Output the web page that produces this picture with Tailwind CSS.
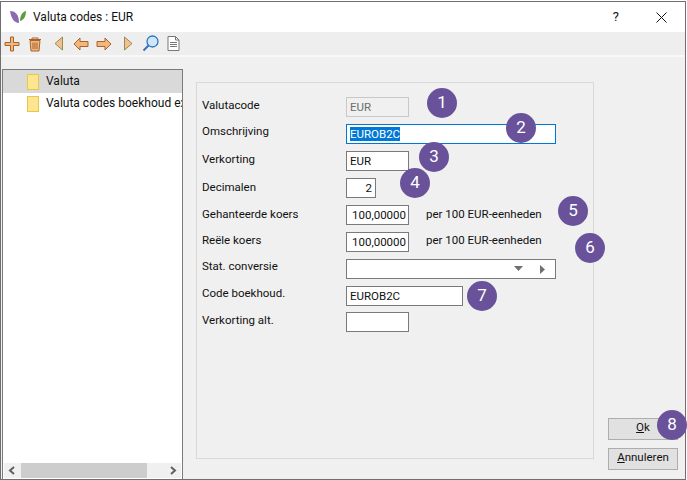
<!DOCTYPE html>
<html>
  <head>
    <meta charset="UTF-8" />
    <title>Valuta codes : EUR</title>
    <script src="https://cdn.jsdelivr.net/npm/@tailwindcss/browser@4"></script>
  </head>

  <body class="bg-white">
    <div class="relative w-[687px] h-[480px] overflow-hidden font-['Roboto',sans-serif] text-[11.5px] text-[#111] pt-[1px] pr-[1px]">
      <div class="flex flex-col h-[479px] border-[1.5px] border-[#6f6f6f] bg-[#f0f0f0]">
        <!-- title bar -->
        <div class="flex items-center h-[30px] bg-white pl-[8px] shrink-0">
          <svg width="18" height="14" viewBox="0 0 18 14">
            <path d="M1 1C6 1 10 4 10 13C5 13 2 8 1 1Z" fill="#8a6bb1" />
            <path d="M17 1C13 2 11 6 11 11C15 10 17 6 17 1Z" fill="#5c9e3c" />
          </svg>
          <span class="ml-[6px] text-[12px]">Valuta codes : EUR</span>
          <span class="ml-auto mr-[37px] text-[13px]">?</span>
          <svg class="mr-[18px]" width="11" height="11" viewBox="0 0 11 11">
            <path d="M0.5 0.5L10.5 10.5M10.5 0.5L0.5 10.5" stroke="#111" fill="none" />
          </svg>
        </div>

        <!-- toolbar -->
        <div class="flex items-center h-[23px] bg-[#eeeeee] shrink-0 pl-[2px] border-b-0">
          <svg class="ml-[1px]" width="16" height="16" viewBox="0 0 16 16">
            <path d="M6.5 1H9.5V6.5H15V9.5H9.5V15H6.5V9.5H1V6.5H6.5Z" fill="#f3b67c" stroke="#a5652e" />
          </svg>
          <svg class="ml-[7px]" width="16" height="16" viewBox="0 0 16 16">
            <path d="M2 3.5H14M5 3.5V2H11V3.5" fill="none" stroke="#a5652e" />
            <path d="M3 4.5H13L12 15H4Z" fill="#f3b67c" stroke="#a5652e" />
            <path d="M6 6.5V13M8 6.5V13M10 6.5V13" stroke="#a5652e" />
          </svg>
          <svg class="ml-[11px]" width="10" height="15" viewBox="0 0 10 15">
            <path d="M8.5 1V14L1 7.5Z" fill="#f3c08e" stroke="#9a8a55" />
          </svg>
          <svg class="ml-[9px]" width="16" height="14" viewBox="0 0 16 14">
            <path d="M7 1L1 7L7 13V9.5H15V4.5H7Z" fill="#f3b67c" stroke="#a5652e" />
          </svg>
          <svg class="ml-[7px]" width="16" height="14" viewBox="0 0 16 14">
            <path d="M9 1L15 7L9 13V9.5H1V4.5H9Z" fill="#f3b67c" stroke="#a5652e" />
          </svg>
          <svg class="ml-[11px]" width="10" height="15" viewBox="0 0 10 15">
            <path d="M1.5 1V14L9 7.5Z" fill="#f3c08e" stroke="#9a8a55" />
          </svg>
          <svg class="ml-[9px]" width="17" height="17" viewBox="0 0 17 17">
            <circle cx="10.5" cy="6.5" r="5.5" fill="#cfe6fa" stroke="#2f74c0" stroke-width="1.3" />
            <path d="M6.5 10.5L1.5 15.5" stroke="#2f74c0" stroke-width="2" />
          </svg>
          <svg class="ml-[8px]" width="13" height="15" viewBox="0 0 13 15">
            <path d="M1 .5H8.5L12 4V14.5H1Z" fill="#fff" stroke="#777" />
            <path d="M8.5 .5V4H12M3 6.5H10M3 8.5H10M3 10.5H10" fill="none" stroke="#777" />
          </svg>
        </div>
        <div class="h-[2px] bg-[#f8f8f8] shrink-0"></div>

        <div class="flex grow min-h-0 pt-[12px]">
          <!-- tree -->
          <div class="flex flex-col w-[181px] ml-[1px] border-[1.5px] border-[#7a7a7a] bg-white shrink-0 border-b-0">
            <div class="flex items-center h-[23px] bg-[#d9d9d9] pl-[24px] overflow-hidden">
              <div class="w-[12px] h-[16px] bg-[#fde68f] border border-[#e8c84a] shrink-0"></div>
              <span class="ml-[7px] pb-[2px] text-[12px] whitespace-nowrap">Valuta</span>
            </div>
            <div class="flex items-center h-[22px] pl-[24px] overflow-hidden">
              <div class="w-[12px] h-[16px] bg-[#fde68f] border border-[#e8c84a] shrink-0"></div>
              <span class="ml-[7px] pb-[2px] text-[12px] whitespace-nowrap">Valuta codes boekhoud extern</span>
            </div>
            <div class="grow"></div>
            <div class="flex items-center h-[15px] mb-[1px] mx-[1px] bg-[#f0f0f0] shrink-0">
              <svg class="ml-[4px]" width="8" height="9" viewBox="0 0 8 9">
                <path d="M6 1L2 4.5L6 8" fill="none" stroke="#606060" stroke-width="2" />
              </svg>
              <div class="ml-[5px] w-[126px] h-full bg-[#cdcdcd]"></div>
              <svg class="ml-auto mr-[4px]" width="8" height="9" viewBox="0 0 8 9">
                <path d="M2 1L6 4.5L2 8" fill="none" stroke="#606060" stroke-width="2" />
              </svg>
            </div>
          </div>

          <!-- form -->
          <div class="ml-[13px] mt-[13px] mb-[20px] w-[398px] border border-[#d9d9d9] pt-[14px] pl-[5px] shrink-0">
            <div class="flex items-center h-[20px] mb-[7px]">
              <label class="w-[144px] pb-[2px]">Valutacode</label>
              <div class="w-[63px] h-[20px] border border-[#c8c8c8] px-[3px] text-[#6d6d6d] leading-[18px]">EUR</div>
            </div>
            <div class="flex items-center h-[20px] mb-[7px]">
              <label class="w-[144px] pb-[4px]">Omschrijving</label>
              <div class="w-[210px] h-[20px] border border-[#0078d7] bg-white px-[3px] leading-[18px]"><span class="inline-block bg-[#0078d7] text-white leading-[14px]">EUROB2C</span></div>
            </div>
            <div class="flex items-center h-[20px] mb-[7px]">
              <label class="w-[144px] pb-[2px]">Verkorting</label>
              <div class="w-[63px] h-[20px] border border-[#7a7a7a] bg-white px-[3px] leading-[18px]">EUR</div>
            </div>
            <div class="flex items-center h-[20px] mb-[7px]">
              <label class="w-[144px]">Decimalen</label>
              <div class="w-[30px] h-[20px] border border-[#7a7a7a] bg-white px-[3px] text-right leading-[18px]">2</div>
            </div>
            <div class="flex items-center h-[20px] mb-[7px]">
              <label class="w-[144px]">Gehanteerde koers</label>
              <div class="w-[63px] h-[20px] border border-[#7a7a7a] bg-white px-[2px] text-right leading-[18px]">100,00000</div>
              <span class="ml-[17px]">per 100 EUR-eenheden</span>
            </div>
            <div class="flex items-center h-[20px] mb-[7px]">
              <label class="w-[144px] pb-[2px]">Reële koers</label>
              <div class="w-[63px] h-[20px] border border-[#7a7a7a] bg-white px-[2px] text-right leading-[18px]">100,00000</div>
              <span class="ml-[17px] pb-[2px]">per 100 EUR-eenheden</span>
            </div>
            <div class="flex items-center h-[20px] mb-[7px]">
              <label class="w-[144px] pb-[4px]">Stat. conversie</label>
              <div class="flex items-center justify-end w-[210px] h-[20px] border border-[#7a7a7a] bg-white">
                <svg width="9" height="6" viewBox="0 0 9 6"><path d="M0 0H9L4.5 5Z" fill="#707070" /></svg>
                <svg class="ml-[17px] mr-[10px]" width="5" height="9" viewBox="0 0 5 9"><path d="M0 0L5 4.5L0 9Z" fill="#707070" /></svg>
              </div>
            </div>
            <div class="flex items-center h-[20px] mb-[6px]">
              <label class="w-[144px] pb-[4px]">Code boekhoud.</label>
              <div class="w-[117px] h-[20px] border border-[#7a7a7a] bg-white px-[3px] leading-[18px]">EUROB2C</div>
            </div>
            <div class="flex items-center h-[20px]">
              <label class="w-[144px] pb-[2px]">Verkorting alt.</label>
              <div class="w-[63px] h-[20px] border border-[#7a7a7a] bg-white"></div>
            </div>
          </div>

          <!-- buttons -->
          <div class="flex flex-col justify-end grow pb-[9px] pl-[14px]">
            <button class="w-[70px] h-[22px] bg-[#e1e1e1] border border-[#adadad] mb-[8px] text-center pb-[4px]"><span class="underline">O</span>k</button>
            <button class="w-[70px] h-[22px] bg-[#e1e1e1] border border-[#adadad] text-center pb-[2px]"><span class="underline">A</span>nnuleren</button>
          </div>
        </div>
      </div>

      <!-- numbered callouts -->
      <div class="absolute left-[427px] top-[88px] w-[30px] h-[30px] rounded-full bg-[#6a529b] text-white text-[17px] flex items-center justify-center">1</div>
      <div class="absolute left-[506px] top-[113px] w-[30px] h-[30px] rounded-full bg-[#6a529b] text-white text-[17px] flex items-center justify-center">2</div>
      <div class="absolute left-[419px] top-[142px] w-[30px] h-[30px] rounded-full bg-[#6a529b] text-white text-[17px] flex items-center justify-center">3</div>
      <div class="absolute left-[400px] top-[168px] w-[30px] h-[30px] rounded-full bg-[#6a529b] text-white text-[17px] flex items-center justify-center">4</div>
      <div class="absolute left-[558px] top-[196px] w-[30px] h-[30px] rounded-full bg-[#6a529b] text-white text-[17px] flex items-center justify-center">5</div>
      <div class="absolute left-[575px] top-[233px] w-[30px] h-[30px] rounded-full bg-[#6a529b] text-white text-[17px] flex items-center justify-center">6</div>
      <div class="absolute left-[467px] top-[281px] w-[30px] h-[30px] rounded-full bg-[#6a529b] text-white text-[17px] flex items-center justify-center">7</div>
      <div class="absolute left-[657px] top-[410px] w-[30px] h-[30px] rounded-full bg-[#6a529b] text-white text-[17px] flex items-center justify-center">8</div>
    </div>
  </body>
</html>
